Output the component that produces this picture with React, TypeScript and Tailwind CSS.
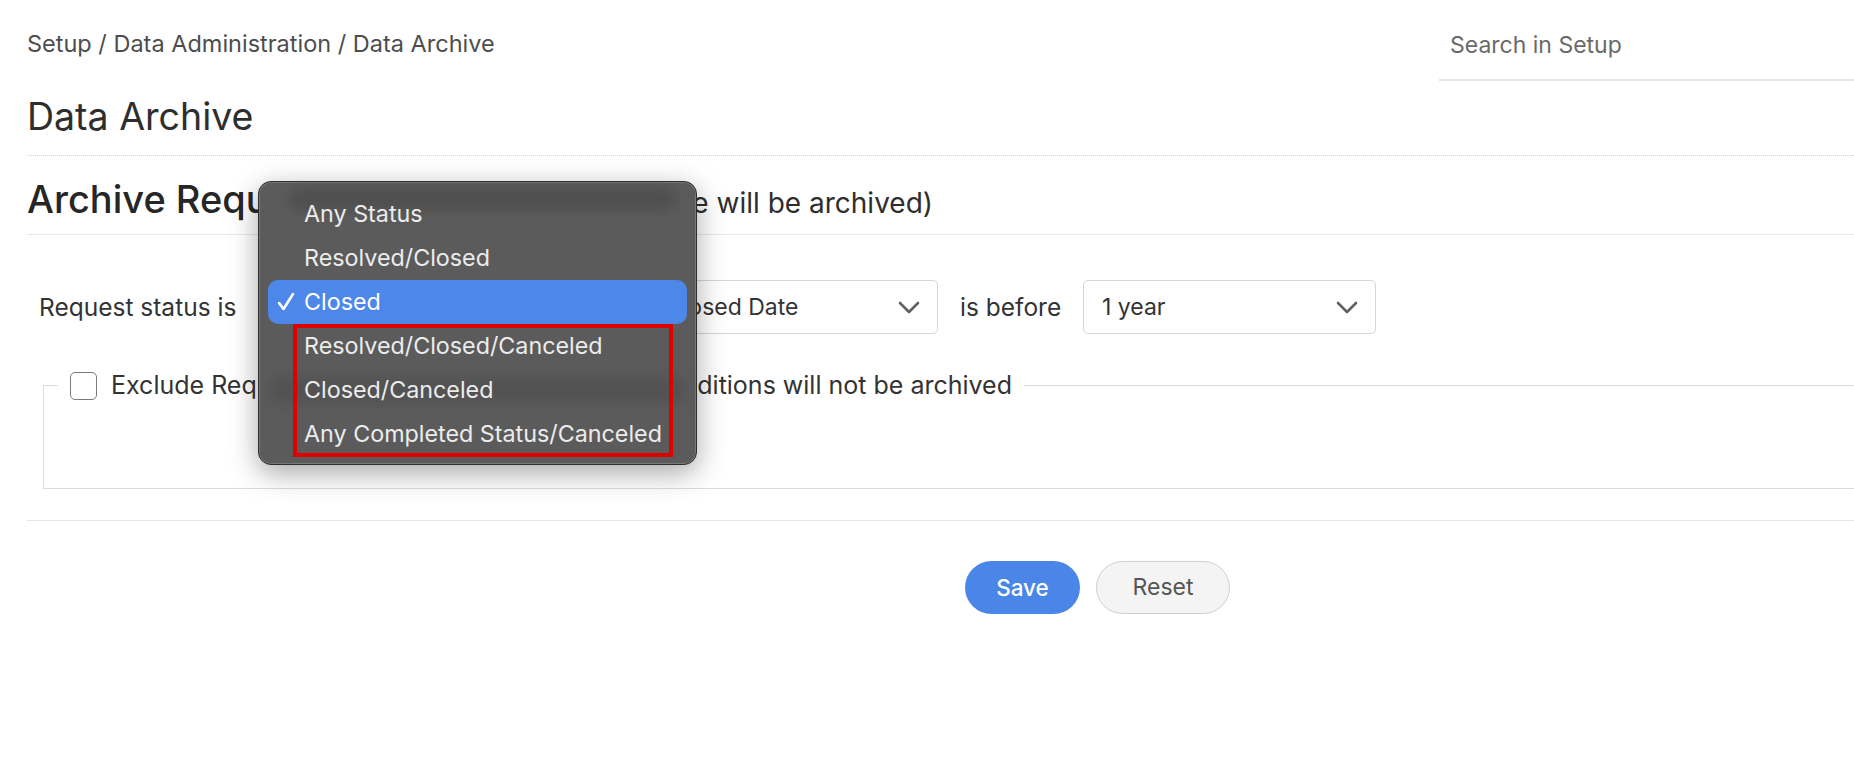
import React from "react";

function Chevron() {
  return (
    <svg width="22" height="13" viewBox="0 0 22 13" fill="none">
      <path d="M2 2 L11 11 L20 2" stroke="#606060" strokeWidth="2.6" strokeLinecap="round" strokeLinejoin="round" />
    </svg>
  );
}

function Check() {
  return (
    <svg width="18" height="20" viewBox="0 0 18 20" fill="none">
      <path d="M2 11 L6.5 17 L16 2" stroke="white" strokeWidth="2.6" strokeLinecap="round" strokeLinejoin="round" />
    </svg>
  );
}

function Select({ value, className }: { value: string; className: string }) {
  return (
    <div className={"h-[54px] flex items-center justify-between rounded-[5px] border border-[#d6d6d6] bg-white pl-[18px] pr-[17px] " + className}>
      <span className="text-[23px] text-[#333]">{value}</span>
      <Chevron />
    </div>
  );
}

const items = [
  "Any Status",
  "Resolved/Closed",
  "Closed",
  "Resolved/Closed/Canceled",
  "Closed/Canceled",
  "Any Completed Status/Canceled",
];

export default function App() {
  return (
    <div className="relative w-[1854px] h-[762px] overflow-hidden bg-white text-[#333] [font-family:Inter,'Liberation_Sans',sans-serif]">
      <div className="pl-[27px]">
        {/* header */}
        <div className="flex justify-between h-[81px]">
          <div className="pt-[29px] text-[23.5px] leading-[30px] text-[#4d4d4d]">
            Setup / Data Administration / Data Archive
          </div>
          <div className="w-[415px] h-[81px] border-b-2 border-[#e6e6e6] pt-[30px] pl-[11px] text-[23px] leading-[30px] text-[#6a6a6a]">
            Search in Setup
          </div>
        </div>

        <div className="mt-[14px] pb-[16px] border-b border-dotted border-[#d4d4d4]">
          <h1 className="text-[37.5px] leading-[44px] text-[#2e2e2e]">Data Archive</h1>
        </div>

        <div className="pt-[20px] pb-[10px] border-b border-[#e8e8e8]">
          <div className="w-[906px] flex items-baseline justify-between">
            <h2 className="text-[38px] leading-[46px] font-medium text-[#262626]">Archive Requests</h2>
            <span className="text-[28px] text-[#2e2e2e]">(Requests in this rule will be archived)</span>
          </div>
        </div>

        {/* condition row */}
        <div className="mt-[45px] flex items-center pl-[12px]">
          <span className="text-[24.5px] text-[#333] w-[223px]">Request status is</span>
          <Select value="Closed" className="w-[369px]" />
          <Select value="Closed Date" className="w-[291px] ml-[16px]" />
          <span className="ml-[22px] w-[123px] text-[24.5px] text-[#333]">is before</span>
          <Select value="1 year" className="w-[293px]" />
        </div>

        {/* fieldset */}
        <fieldset className="mt-[33px] ml-[16px] w-[1900px] h-[122px] border border-[#dcdcdc]">
          <legend className="ml-[14px] px-[12px] flex items-center">
            <span className="w-[27px] h-[28px] rounded-[5px] border-[1.5px] border-[#7a7a7a] bg-white" />
            <span className="ml-[14px] w-[901px] flex justify-between text-[25px] text-[#333]">
              <span>Exclude Requests with</span>
              <span>these conditions will not be archived</span>
            </span>
          </legend>
        </fieldset>

        <div className="mt-[31px] border-t border-[#e6e6e6]" />

        <div className="mt-[40px] pl-[938px] flex gap-[16px]">
          <button className="w-[115px] h-[53px] rounded-full bg-[#4a86e8] text-white text-[22.5px] font-medium">
            Save
          </button>
          <button className="w-[134px] h-[53px] rounded-full bg-[#f4f4f4] border border-[#cfcfcf] text-[#555] text-[23px]">
            Reset
          </button>
        </div>
      </div>

      {/* native select popup */}
      <div className="absolute left-[258px] top-[181px] w-[439px] h-[284px] rounded-[13px] bg-[#5b5b5b] border border-[#2e2e2e] shadow-[0_8px_28px_rgba(0,0,0,0.35),inset_0_0_0_1px_rgba(255,255,255,0.18)] overflow-hidden [font-family:Inter,'Noto_Sans',sans-serif]">
        <div className="absolute left-[30px] right-[20px] top-[6px] h-[22px] rounded-full bg-[#4f4f4f] blur-[6px]" />
        <div className="absolute left-[10px] right-[10px] top-[195px] h-[26px] rounded-full bg-[#525252] blur-[7px]" />
        <div className="relative pt-[10px] px-[9px]">
          {items.map((it) => {
            const sel = it === "Closed";
            return (
              <div
                key={it}
                className={
                  "h-[44px] flex items-center rounded-[10px] text-[23.3px] " +
                  (sel ? "bg-[#4d87ea] text-white" : "text-[#ececec]")
                }
              >
                <span className="w-[36px] pl-[9px] flex items-center">{sel ? <Check /> : null}</span>
                <span>{it}</span>
              </div>
            );
          })}
        </div>
        <div className="absolute left-[34px] top-[142px] w-[380px] h-[133px] border-[4px] border-[#e10000]" />
      </div>
    </div>
  );
}
